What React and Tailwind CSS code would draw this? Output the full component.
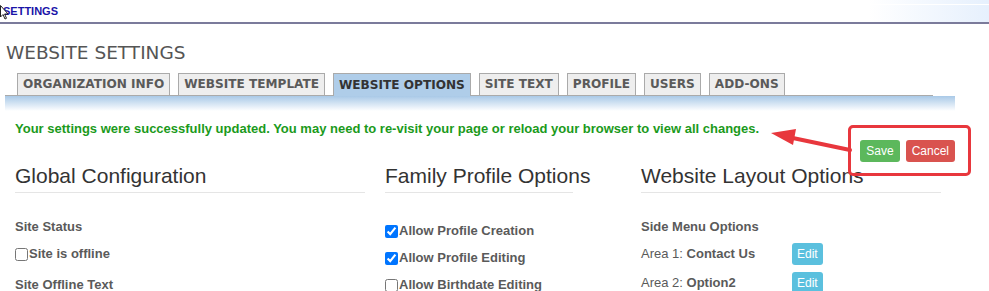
import React from 'react'

const tabs = ['ORGANIZATION INFO', 'WEBSITE TEMPLATE', 'WEBSITE OPTIONS', 'SITE TEXT', 'PROFILE', 'USERS', 'ADD-ONS']

const Tab = ({ label, active }) => (
  <div
    className={
      'h-[22px] px-[5px] flex items-center border border-b-0 border-[#aaaaaa] text-[12.1px] font-bold whitespace-nowrap ' +
      (active ? 'bg-[#afcde9] text-[#333] -mb-px h-[23px]' : 'bg-[#eeeeee] text-[#5a5a5a]')
    }
    style={{ fontFamily: '"DejaVu Sans", Verdana, sans-serif' }}
  >
    {label}
  </div>
)

const Heading = ({ children }) => (
  <h3 className="text-[21px] leading-[24px] text-[#333] pb-[4px] border-b border-[#e5e5e5] whitespace-nowrap">{children}</h3>
)

const Check = ({ label, checked }) => (
  <label className="flex items-center h-[18px] text-[13px] font-bold text-[#5a5a5a] whitespace-nowrap">
    <input type="checkbox" defaultChecked={checked} className="m-0 mr-px w-[13px] h-[13px]" />
    {label}
  </label>
)

const EditRow = ({ area, name }) => (
  <div className="flex items-center h-[22px] mt-[7px]">
    <div className="w-[151px] text-[13px] text-[#5a5a5a]">
      {area} <span className="font-bold">{name}</span>
    </div>
    <button className="h-[22px] px-[5px] rounded-[3px] bg-[#5bc0de] text-white text-[12px]">Edit</button>
  </div>
)

export default function App() {
  return (
    <div className="relative w-[989px] h-[291px] overflow-hidden bg-white" style={{ fontFamily: '"Liberation Sans", Arial, sans-serif' }}>
      {/* top bar */}
      <div className="relative h-[24px] border-b-2 border-[#7b7b9b] flex items-center">
        <div className="absolute right-0 top-0 h-[22px] w-[120px] bg-gradient-to-r from-white to-[#e6f0fd]">
          <div className="mt-[4px] h-px bg-white" />
        </div>
        <span className="relative pl-[3px] text-[11px] font-bold text-[#1a14a8] leading-none">SETTINGS</span>
        <svg className="absolute left-0 top-[5px]" width="9" height="15" viewBox="0 0 9 15">
          <path d="M0.5 0.5 L0.5 12 L3 9.5 L5 14 L6.5 13.3 L4.6 9 L8 9 Z" fill="white" stroke="#222" strokeWidth="1" />
        </svg>
      </div>

      <h2
        className="mt-[18px] ml-[6px] text-[18.5px] leading-[22px] text-[#555]"
        style={{ fontFamily: '"DejaVu Sans", Verdana, sans-serif' }}
      >
        WEBSITE SETTINGS
      </h2>

      {/* tabs */}
      <div className="mt-[9px] ml-[5px] w-[950px]">
        <div className="w-[928px] flex items-end gap-2 pl-[12px] border-b border-[#aaaaaa]">
          {tabs.map((t) => (
            <Tab key={t} label={t} active={t === 'WEBSITE OPTIONS'} />
          ))}
        </div>
        <div className="h-[15px] bg-gradient-to-b from-[#a9c9e7] to-white" />
      </div>

      <p className="mt-[9px] ml-[15px] text-[13px] leading-[18px] font-bold text-[#1b9a1b]">
        Your settings were successfully updated. You may need to re-visit your page or reload your browser to view all changes.
      </p>

      <div className="w-[955px] flex justify-end gap-[6px] mt-[2px]">
        <button className="h-[22px] px-[6px] rounded-[3px] bg-[#5cb85c] text-white text-[12px]">Save</button>
        <button className="h-[22px] px-[6px] rounded-[3px] bg-[#d9534f] text-white text-[12px]">Cancel</button>
      </div>

      {/* columns */}
      <div className="flex mt-[2px]">
        <div className="ml-[15px] w-[350px]">
          <Heading>Global Configuration</Heading>
          <div className="mt-[25px] text-[13px] leading-[18px] font-bold text-[#5a5a5a]">Site Status</div>
          <div className="mt-[9px]">
            <Check label="Site is offline" />
          </div>
          <div className="mt-[13px] text-[13px] leading-[18px] font-bold text-[#5a5a5a]">Site Offline Text</div>
        </div>

        <div className="ml-[18px] w-[190px]">
          <div className="pl-[2px]">
            <Heading>Family Profile Options</Heading>
          </div>
          <div className="pl-[2px] mt-[29px] flex flex-col gap-[9px]">
            <Check label="Allow Profile Creation" checked />
            <Check label="Allow Profile Editing" checked />
            <Check label="Allow Birthdate Editing" />
          </div>
        </div>

        <div className="ml-[68px] w-[300px]">
          <Heading>Website Layout Options</Heading>
          <div className="mt-[25px] text-[13px] leading-[18px] font-bold text-[#5a5a5a]">Side Menu Options</div>
          <EditRow area="Area 1:" name="Contact Us" />
          <EditRow area="Area 2:" name="Option2" />
        </div>
      </div>

      {/* annotation overlay */}
      <div className="absolute left-[848px] top-[125px] w-[123px] h-[51px] border-[3px] border-[#e8373d] rounded-[5px]" />
      <svg className="absolute left-0 top-0 pointer-events-none" width="989" height="291">
        <line x1="850" y1="150" x2="788" y2="137" stroke="#e8373d" strokeWidth="4" strokeLinecap="round" />
        <polygon points="771,133 796,129 793,145" fill="#e8373d" />
      </svg>
    </div>
  )
}
